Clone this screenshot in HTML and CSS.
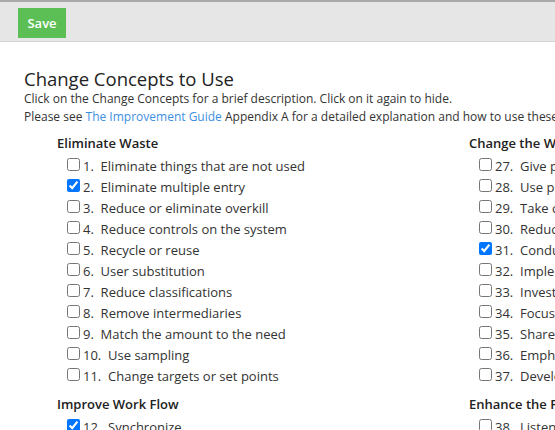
FILE: index.html
```html
<!DOCTYPE html>
<html lang="en">
<head>
<meta charset="utf-8">
<title>Change Concepts to Use</title>
<link rel="stylesheet" href="styles.css">
</head>
<body>
<div class="toolbar">
  <button class="btn-save" type="button">Save</button>
</div>
<main class="content">
  <h1 class="title">Change Concepts to Use</h1>
  <p class="intro">Click on the Change Concepts for a brief description. Click on it again to hide.<br>Please see <a href="#" class="link">The Improvement Guide</a> Appendix A for a detailed explanation and how to use these change concepts.</p>
  <div class="columns">
    <div class="column">
      <section class="group">
        <h2 class="group-title">Eliminate Waste</h2>
        <label class="item"><input type="checkbox">1.&nbsp; Eliminate things that are not used</label>
        <label class="item"><input type="checkbox" checked>2.&nbsp; Eliminate multiple entry</label>
        <label class="item"><input type="checkbox">3.&nbsp; Reduce or eliminate overkill</label>
        <label class="item"><input type="checkbox">4.&nbsp; Reduce controls on the system</label>
        <label class="item"><input type="checkbox">5.&nbsp; Recycle or reuse</label>
        <label class="item"><input type="checkbox">6.&nbsp; User substitution</label>
        <label class="item"><input type="checkbox">7.&nbsp; Reduce classifications</label>
        <label class="item"><input type="checkbox">8.&nbsp; Remove intermediaries</label>
        <label class="item"><input type="checkbox">9.&nbsp; Match the amount to the need</label>
        <label class="item"><input type="checkbox">10.&nbsp; Use sampling</label>
        <label class="item"><input type="checkbox">11.&nbsp; Change targets or set points</label>
      </section>
      <section class="group">
        <h2 class="group-title">Improve Work Flow</h2>
        <label class="item"><input type="checkbox" checked>12.&nbsp; Synchronize</label>
        <label class="item"><input type="checkbox">13.&nbsp; Schedule into multiple processes</label>
        <label class="item"><input type="checkbox">14.&nbsp; Minimize handoffs</label>
        <label class="item"><input type="checkbox">15.&nbsp; Move steps in the process close together</label>
      </section>
    </div>
    <div class="column">
      <section class="group">
        <h2 class="group-title">Change the Work Environment</h2>
        <label class="item"><input type="checkbox">27.&nbsp; Give people access to information</label>
        <label class="item"><input type="checkbox">28.&nbsp; Use proper measurements</label>
        <label class="item"><input type="checkbox">29.&nbsp; Take care of basics</label>
        <label class="item"><input type="checkbox">30.&nbsp; Reduce demotivating aspects of pay system</label>
        <label class="item"><input type="checkbox" checked>31.&nbsp; Conduct training</label>
        <label class="item"><input type="checkbox">32.&nbsp; Implement cross-training</label>
        <label class="item"><input type="checkbox">33.&nbsp; Invest more resources in improvement</label>
        <label class="item"><input type="checkbox">34.&nbsp; Focus on core processes and purpose</label>
        <label class="item"><input type="checkbox">35.&nbsp; Share risks</label>
        <label class="item"><input type="checkbox">36.&nbsp; Emphasize natural and logical consequences</label>
        <label class="item"><input type="checkbox">37.&nbsp; Develop alliances/cooperative relationships</label>
      </section>
      <section class="group">
        <h2 class="group-title">Enhance the Producer/Customer Relationship</h2>
        <label class="item"><input type="checkbox">38.&nbsp; Listen to customers</label>
        <label class="item"><input type="checkbox">39.&nbsp; Coach customers to use product/service</label>
        <label class="item"><input type="checkbox">40.&nbsp; Focus on the outcome to a customer</label>
      </section>
    </div>
  </div>
</main>
</body>
</html>
```
FILE: styles.css
```css
html, body {
  margin: 0;
  padding: 0;
  overflow: hidden;
  background: #ffffff;
}
body {
  font-family: "Open Sans", "Liberation Sans", sans-serif;
  font-size: 13px;
  line-height: 18px;
  color: #333333;
}
.toolbar {
  border-top: 2px solid #a9a9a9;
  border-bottom: 1px solid #d3d3d3;
  background: #e6e6e6;
  padding: 6px 18px 3px;
  height: 30px;
}
.btn-save {
  display: block;
  width: 48px;
  height: 30px;
  margin: 0;
  padding: 0;
  border: none;
  border-radius: 0;
  background: #5cbf55;
  color: #ffffff;
  font-family: "Open Sans", "Liberation Sans", sans-serif;
  font-size: 13px;
  font-weight: 600;
  line-height: 30px;
}
.content {
  padding: 26px 0 0 24px;
  width: 1400px;
}
.title {
  margin: 0;
  font-size: 18.5px;
  font-weight: 400;
  line-height: 22px;
  color: #222222;
}
.intro {
  margin: 0;
  font-size: 12px;
  white-space: nowrap;
}
.link {
  color: #3d8fdf;
  text-decoration: none;
}
.columns {
  display: grid;
  grid-template-columns: repeat(2, 412px);
  padding: 8px 0 0 33px;
}
.group {
  margin-bottom: 10px;
}
.group-title {
  margin: 0 0 2px;
  font-size: 13px;
  font-weight: 600;
  line-height: 18px;
  color: #222222;
}
.item {
  display: block;
  height: 21px;
  padding-left: 10px;
  white-space: nowrap;
}
.item input {
  margin: 4px 3px 0 0;
  vertical-align: baseline;
}
```
